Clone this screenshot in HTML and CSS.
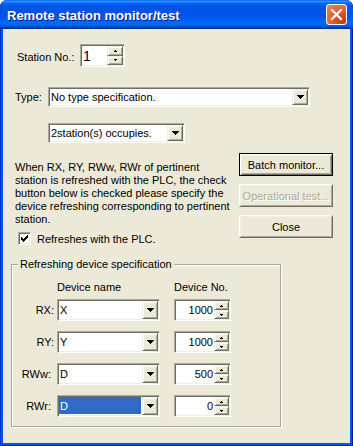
FILE: index.html
```html
<!DOCTYPE html>
<html>
<head>
<meta charset="utf-8">
<link rel="stylesheet" href="styles.css">
</head>
<body>
<div class="window">
  <div class="titlebar">
    <span class="title">Remote station monitor/test</span>
    <div class="close-x">
      <svg width="21" height="21" viewBox="0 0 21 21"><path d="M6 6 L15 15 M15 6 L6 15" stroke="#fff" stroke-width="2.2" stroke-linecap="square"/></svg>
    </div>
  </div>
  <div class="client">
    <div class="row station-row">
      <span class="lbl station-lbl">Station No.:</span>
      <div class="spin station-spin">
        <span class="spin-val">1</span>
        <div class="spin-btns">
          <div class="sb"><svg width="3" height="2" shape-rendering="crispEdges"><path d="M1 0h1v1H1z M0 1h3v1H0z"/></svg></div>
          <div class="sb"><svg width="3" height="2" shape-rendering="crispEdges"><path d="M0 0h3v1H0z M1 1h1v1H1z"/></svg></div>
        </div>
      </div>
    </div>
    <div class="row type-row">
      <span class="lbl type-lbl">Type:</span>
      <div class="combo type-combo">
        <span class="combo-text">No type specification.</span>
        <div class="drop"><svg width="7" height="4" shape-rendering="crispEdges"><path d="M0 0h7v1H0z M1 1h5v1H1z M2 2h3v1H2z M3 3h1v1H3z"/></svg></div>
      </div>
    </div>
    <div class="row occ-row">
      <div class="combo occ-combo">
        <span class="combo-text">2station(s) occupies.</span>
        <div class="drop"><svg width="7" height="4" shape-rendering="crispEdges"><path d="M0 0h7v1H0z M1 1h5v1H1z M2 2h3v1H2z M3 3h1v1H3z"/></svg></div>
      </div>
    </div>
    <div class="middle">
      <div class="left-col">
        <p class="note">When RX, RY, RWw, RWr of pertinent station is refreshed with the PLC, the check button below is checked please specify the device refreshing corresponding to pertinent station.</p>
        <div class="check-row">
          <span class="checkbox"><svg width="7" height="7" shape-rendering="crispEdges"><path d="M0 2h1v3H0z M1 3h1v3H1z M2 4h1v3H2z M3 3h1v3H3z M4 2h1v3H4z M5 1h1v3H5z M6 0h1v3H6z"/></svg></span>
          <span class="check-lbl">Refreshes with the PLC.</span>
        </div>
      </div>
      <div class="btn-col">
        <button class="btn default">Batch monitor...</button>
        <button class="btn disabled">Operational test...</button>
        <button class="btn">Close</button>
      </div>
    </div>
    <fieldset class="group">
      <legend class="legend">Refreshing device specification</legend>
      <div class="grid">
        <span></span>
        <span class="hdr">Device name</span>
        <span class="hdr">Device No.</span>

        <span class="rlbl">RX:</span>
        <div class="combo dev-combo">
          <span class="combo-text">X</span>
          <div class="drop"><svg width="7" height="4" shape-rendering="crispEdges"><path d="M0 0h7v1H0z M1 1h5v1H1z M2 2h3v1H2z M3 3h1v1H3z"/></svg></div>
        </div>
        <div class="spin dev-spin">
          <span class="spin-val">1000</span>
          <div class="spin-btns">
            <div class="sb"><svg width="3" height="2" shape-rendering="crispEdges"><path d="M1 0h1v1H1z M0 1h3v1H0z"/></svg></div>
            <div class="sb"><svg width="3" height="2" shape-rendering="crispEdges"><path d="M0 0h3v1H0z M1 1h1v1H1z"/></svg></div>
          </div>
        </div>

        <span class="rlbl">RY:</span>
        <div class="combo dev-combo">
          <span class="combo-text">Y</span>
          <div class="drop"><svg width="7" height="4" shape-rendering="crispEdges"><path d="M0 0h7v1H0z M1 1h5v1H1z M2 2h3v1H2z M3 3h1v1H3z"/></svg></div>
        </div>
        <div class="spin dev-spin">
          <span class="spin-val">1000</span>
          <div class="spin-btns">
            <div class="sb"><svg width="3" height="2" shape-rendering="crispEdges"><path d="M1 0h1v1H1z M0 1h3v1H0z"/></svg></div>
            <div class="sb"><svg width="3" height="2" shape-rendering="crispEdges"><path d="M0 0h3v1H0z M1 1h1v1H1z"/></svg></div>
          </div>
        </div>

        <span class="rlbl rw">RWw:</span>
        <div class="combo dev-combo">
          <span class="combo-text">D</span>
          <div class="drop"><svg width="7" height="4" shape-rendering="crispEdges"><path d="M0 0h7v1H0z M1 1h5v1H1z M2 2h3v1H2z M3 3h1v1H3z"/></svg></div>
        </div>
        <div class="spin dev-spin">
          <span class="spin-val">500</span>
          <div class="spin-btns">
            <div class="sb"><svg width="3" height="2" shape-rendering="crispEdges"><path d="M1 0h1v1H1z M0 1h3v1H0z"/></svg></div>
            <div class="sb"><svg width="3" height="2" shape-rendering="crispEdges"><path d="M0 0h3v1H0z M1 1h1v1H1z"/></svg></div>
          </div>
        </div>

        <span class="rlbl rw">RWr:</span>
        <div class="combo dev-combo sel">
          <span class="combo-text"><span class="hl">D</span></span>
          <div class="drop"><svg width="7" height="4" shape-rendering="crispEdges"><path d="M0 0h7v1H0z M1 1h5v1H1z M2 2h3v1H2z M3 3h1v1H3z"/></svg></div>
        </div>
        <div class="spin dev-spin">
          <span class="spin-val">0</span>
          <div class="spin-btns">
            <div class="sb"><svg width="3" height="2" shape-rendering="crispEdges"><path d="M1 0h1v1H1z M0 1h3v1H0z"/></svg></div>
            <div class="sb"><svg width="3" height="2" shape-rendering="crispEdges"><path d="M0 0h3v1H0z M1 1h1v1H1z"/></svg></div>
          </div>
        </div>
      </div>
    </fieldset>
  </div>
</div>
</body>
</html>
```

FILE: styles.css
```css
html, body {
  margin: 0;
  padding: 0;
}
body {
  width: 353px;
  height: 446px;
  overflow: hidden;
  font-family: "Liberation Sans", Arial, sans-serif;
  font-size: 11px;
  color: #000;
  background: #fff;
}
.window {
  width: 353px;
  height: 446px;
  box-sizing: border-box;
  display: flex;
  flex-direction: column;
  background: #0055EA;
  border-radius: 7px 7px 0 0;
  overflow: hidden;
  box-shadow: inset 1px 0 #0831D9, inset -1px 0 #001EA0, inset 0 -1px #001EA0;
}
.titlebar {
  height: 29px;
  flex: none;
  display: flex;
  align-items: center;
  padding: 0 6px 0 7px;
  box-sizing: border-box;
  border-radius: 7px 7px 0 0;
  background: linear-gradient(to bottom, #0058EE 0%, #3593FF 4%, #288EFF 6%, #127DFF 8%, #036FFC 10%, #0262EE 14%, #0057E5 20%, #0054E3 24%, #0055EB 56%, #005BF5 66%, #026AFE 76%, #0062EF 86%, #0052D6 92%, #0040AB 94%, #003092 100%);
}
.title {
  flex: 1;
  color: #fff;
  font-family: "Liberation Sans", Arial, sans-serif;
  font-weight: bold;
  font-size: 13px;
  text-shadow: 1px 1px #0A1883;
  padding-top: 1px;
}
.close-x {
  width: 21px;
  height: 21px;
  box-sizing: border-box;
  border: 1px solid #fff;
  border-radius: 3px;
  background: radial-gradient(circle at 85% 85%, #C23B13 0%, #E05A33 45%, #EC8663 100%);
  display: flex;
  align-items: center;
  justify-content: center;
}
.close-x svg {
  margin: -1px;
}
.client {
  flex: 1;
  margin: 0 3px 3px;
  background: #ECE9D8;
  display: flex;
  flex-direction: column;
}
.row {
  display: flex;
  align-items: center;
}
.station-row {
  margin-top: 15px;
  padding-left: 14px;
}
.station-lbl {
  width: 63px;
  padding-top: 2px;
}
.type-row {
  margin-top: 20px;
  padding-left: 12px;
}
.type-lbl {
  width: 33px;
}
.occ-row {
  margin-top: 16px;
  padding-left: 45px;
}

/* sunken field */
.combo, .spin {
  display: flex;
  box-sizing: border-box;
  background: #fff;
  border: 1px solid;
  border-color: #ACA899 #fff #fff #ACA899;
  box-shadow: inset 1px 1px #716F64, inset -1px -1px #F1EFE2;
  padding: 1px;
}
.combo-text {
  flex: 1;
  display: flex;
  align-items: center;
  padding-left: 1px;
  white-space: nowrap;
  overflow: hidden;
}
.drop, .sb {
  box-sizing: border-box;
  background: #ECE9D8;
  border: 1px solid;
  border-color: #F1EFE2 #716F64 #716F64 #F1EFE2;
  box-shadow: inset 1px 1px #fff, inset -1px -1px #ACA899;
  display: flex;
  align-items: center;
  justify-content: center;
}
.drop {
  width: 16px;
}
.type-combo {
  width: 262px;
  height: 20px;
}
.occ-combo {
  width: 137px;
  height: 20px;
}
.spin-val {
  flex: 1;
  display: flex;
  align-items: center;
  justify-content: flex-end;
  padding-right: 1px;
}
.spin-btns {
  width: 16px;
  display: flex;
  flex-direction: column;
}
.sb {
  flex: 1;
}
.station-spin {
  width: 45px;
  height: 23px;
}
.station-spin .spin-val {
  justify-content: flex-start;
  padding-left: 1px;
  font-size: 14px;
}
.station-spin .spin-btns {
  width: 16px;
}

/* middle */
.middle {
  margin-top: 10px;
  display: flex;
}
.left-col {
  width: 224px;
  padding-left: 12px;
  padding-top: 8px;
}
.note {
  margin: 0;
  line-height: 13px;
  width: 215px;
}
.check-row {
  display: flex;
  align-items: center;
  margin-top: 6px;
  padding-left: 3px;
  height: 13px;
}
.checkbox {
  width: 13px;
  height: 13px;
  box-sizing: border-box;
  background: #fff;
  border: 1px solid;
  border-color: #ACA899 #fff #fff #ACA899;
  box-shadow: inset 1px 1px #716F64, inset -1px -1px #F1EFE2;
  display: flex;
  align-items: center;
  justify-content: center;
}
.check-lbl {
  margin-left: 6px;
}
.btn-col {
  display: flex;
  flex-direction: column;
  gap: 8px;
}
.btn {
  width: 94px;
  height: 23px;
  box-sizing: border-box;
  margin: 0;
  padding: 0;
  font-family: "Liberation Sans", Arial, sans-serif;
  font-size: 11px;
  color: #000;
  background: #ECE9D8;
  border: 1px solid;
  border-color: #fff #716F64 #716F64 #fff;
  box-shadow: inset 1px 1px #F1EFE2, inset -1px -1px #ACA899;
}
.btn.default {
  border-color: #000;
  box-shadow: inset 1px 1px #fff, inset -1px -1px #716F64, inset 2px 2px #F1EFE2, inset -2px -2px #ACA899;
}
.btn.disabled {
  color: #ACA899;
  text-shadow: 1px 1px #fff;
}

/* group */
.group {
  margin: 13px 0 0 8px;
  padding: 10px 0 9px 0;
  width: 270px;
  box-sizing: border-box;
  border: 1px solid #ACA899;
  box-shadow: inset 1px 1px #fff, 1px 1px #fff;
  min-inline-size: 0;
}
.legend {
  margin-left: 6px;
  padding: 0 2px;
  line-height: 13px;
  background: #ECE9D8;
}
.grid {
  display: grid;
  grid-template-columns: 42px 103px 68px;
  column-gap: 3px;
  row-gap: 10px;
  align-items: center;
}
.grid > :nth-child(3n) {
  margin-left: 11px;
}
.hdr {
  line-height: 13px;
  margin-bottom: -5px;
}
.rlbl {
  text-align: right;
  padding-right: 0;
}
.rlbl.rw {
  padding-right: 3px;
}
.dev-combo, .dev-spin {
  height: 22px;
}
.dev-spin .spin-btns {
  width: 15px;
}
.sel .combo-text {
  align-items: stretch;
  padding: 0 1px 1px 0;
}
.hl {
  flex: 1;
  background: #316AC5;
  color: #fff;
  display: flex;
  align-items: center;
  padding-left: 1px;
}
```
